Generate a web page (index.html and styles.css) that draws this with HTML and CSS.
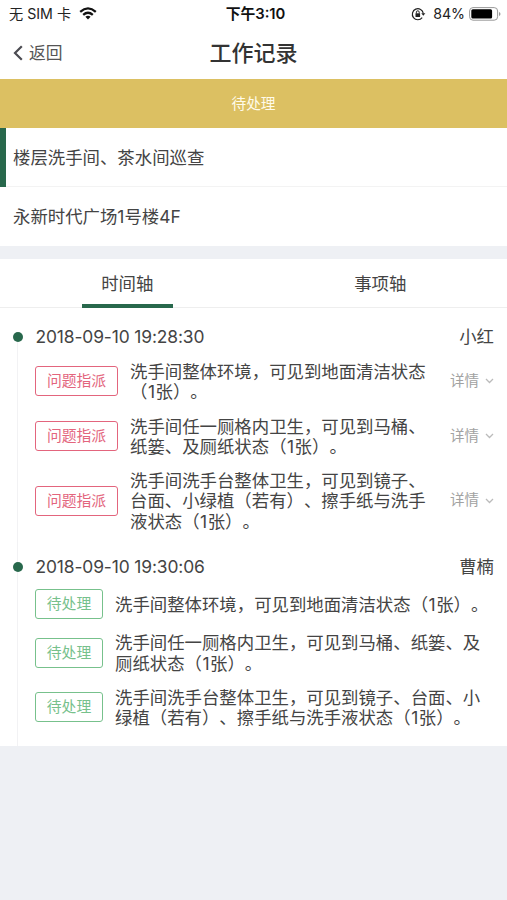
FILE: index.html
```html
<!DOCTYPE html>
<html lang="zh-CN">
<head>
<meta charset="utf-8">
<title>工作记录</title>
<link rel="stylesheet" href="styles.css">
</head>
<body>
<div class="status">
  <div class="status-left"><span>无 SIM 卡</span>
    <svg width="18" height="13" viewBox="0 0 18 13" fill="none" stroke="#111" stroke-width="2.3"><path d="M1.2 4.8Q9-2 16.8 4.8M4.2 7.8Q9 3.7 13.8 7.8"/><path d="M6.4 9.8Q9 7.8 11.6 9.8L9 12.5Z" fill="#111" stroke="none"/></svg>
  </div>
  <div class="status-time">下午3:10</div>
  <div class="status-right">
    <svg width="15" height="14" viewBox="0 0 15 14" fill="none" stroke="#222" stroke-width="1.2"><path d="M11.2 10.6A5.5 5.5 0 1 1 12.3 6.5"/><path d="M10.3 6.2H14.4L12.3 8.8Z" fill="#222" stroke="none"/><path d="M4.5 6.3H9.1V10H4.5Z" fill="#222" stroke="none"/><path d="M5.4 6.5V5.2Q5.4 3.8 6.8 3.8T8.2 5.2V6.5" stroke-width="1"/></svg>
    <span class="percent">84%</span>
    <svg width="32" height="14" viewBox="0 0 32 14"><rect x=".6" y=".6" width="28" height="12.6" rx="3.4" fill="#fff" stroke="#999"/><rect x="2.3" y="2.3" width="20.8" height="9.2" rx="1.5" fill="#000"/><path d="M30 5Q31.5 5.4 31.5 7T30 9Z" fill="#999"/></svg>
  </div>
</div>
<header class="nav">
  <a class="back"><svg width="10" height="16" viewBox="0 0 10 16" fill="none" stroke="#4b4b52" stroke-width="2.2"><path d="M8.8 1.2L2 8L8.8 14.8"/></svg>返回</a>
  <h1>工作记录</h1>
</header>
<div class="banner">待处理</div>
<section class="info">
  <div class="info-row task">楼层洗手间、茶水间巡查</div>
  <div class="info-row">永新时代广场1号楼4F</div>
</section>
<nav class="tabs">
  <div class="tab active"><span>时间轴</span></div>
  <div class="tab"><span>事项轴</span></div>
</nav>
<main class="timeline">
  <section class="group">
    <div class="head"><span class="dot"></span><time>2018-09-10 19:28:30</time><span class="name">小红</span></div>
    <div class="entry red"><span class="badge">问题指派</span><p>洗手间整体环境，可见到地面清洁状态<br>（<b>1</b>张）。</p><a class="more">详情<svg class="chev" viewBox="0 0 9 6"><path d="M1 1L4.5 4.5L8 1"/></svg></a></div>
    <div class="entry red"><span class="badge">问题指派</span><p>洗手间任一厕格内卫生，可见到马桶、<br>纸篓、及厕纸状态（<b>1</b>张）。</p><a class="more">详情<svg class="chev" viewBox="0 0 9 6"><path d="M1 1L4.5 4.5L8 1"/></svg></a></div>
    <div class="entry red"><span class="badge">问题指派</span><p>洗手间洗手台整体卫生，可见到镜子、<br>台面、小绿植（若有）、擦手纸与洗手<br>液状态（<b>1</b>张）。</p><a class="more">详情<svg class="chev" viewBox="0 0 9 6"><path d="M1 1L4.5 4.5L8 1"/></svg></a></div>
  </section>
  <section class="group second">
    <div class="head"><span class="dot"></span><time>2018-09-10 19:30:06</time><span class="name">曹楠</span></div>
    <div class="entry green single"><span class="badge">待处理</span><p>洗手间整体环境，可见到地面清洁状态（<b>1</b>张）。</p></div>
    <div class="entry green"><span class="badge">待处理</span><p>洗手间任一厕格内卫生，可见到马桶、纸篓、及<br>厕纸状态（<b>1</b>张）。</p></div>
    <div class="entry green"><span class="badge">待处理</span><p>洗手间洗手台整体卫生，可见到镜子、台面、小<br>绿植（若有）、擦手纸与洗手液状态（<b>1</b>张）。</p></div>
  </section>
</main>
</body>
</html>
```
FILE: styles.css
```css
* { box-sizing: border-box; }
body {
  margin: 0;
  height: 900px;
  overflow: hidden;
  background: #eef0f4;
  color: #444;
  font: 17.4px/20.3px Inter, "Noto Sans CJK SC", sans-serif;
  text-spacing-trim: space-all;
  white-space: nowrap;
}
p, h1 { margin: 0; }
b { font-weight: inherit; padding: 0 .5px; }
svg { flex: none; }
.status {
  display: grid;
  grid-template-columns: 1fr auto 1fr;
  align-items: center;
  height: 27px;
  padding: 1px 6px 0 9px;
  background: #fff;
  color: #222;
  font-size: 14.2px;
}
.status-left, .status-right { display: flex; align-items: center; }
.status-left { gap: 8px; }
.status-right { justify-content: flex-end; }
.status-time { font-weight: 600; color: #111; padding-left: 1px; font-size: 14.8px; }
.percent { margin: 0 4px 0 7px; }
.nav {
  display: grid;
  grid-template-columns: 1fr auto 1fr;
  align-items: center;
  height: 52px;
  padding: 0 13px;
  background: #fff;
}
.back { display: flex; align-items: center; gap: 6px; font-size: 16.8px; color: #555; }
.nav h1 { font-size: 22px; font-weight: 500; color: #333; }
.banner {
  height: 49px;
  line-height: 51px;
  text-align: center;
  background: #dcc062;
  color: #fffbea;
  font-size: 14.7px;
}
.info { height: 131px; padding-bottom: 13px; }
.info-row { height: 59px; padding-left: 13px; line-height: 60px; background: #fff; }
.task { border-left: 6px solid #28684c; padding-left: 7px; box-shadow: inset 0 -1px #f3f3f3; }
.tabs { display: flex; height: 49px; background: #fff; border-bottom: 1px solid #eee; }
.tab { display: flex; flex: 1; justify-content: center; }
.tab span { width: 91px; height: 49px; text-align: center; line-height: 50px; }
.active span { border-bottom: 4px solid #28684c; margin-left: 1px; }
.timeline { height: 438px; padding: 18px 13px 0; background: #fff linear-gradient(#f2f2f4, #f2f2f4) 17px 28px / 1px 100% no-repeat; }
.head { display: flex; align-items: center; height: 22px; margin-bottom: 14px; }
.head time { letter-spacing: -.12px; }
.dot { width: 10px; height: 10px; border-radius: 50%; background: #28684c; margin-right: 12.5px; }
.name { margin-left: auto; }
.entry { display: flex; align-items: center; margin-bottom: 14px; }
.second { padding-top: 10px; }
.second .head { margin-bottom: 13px; }
.single { height: 27.4px; margin-bottom: 15px; }
.badge {
  flex: none;
  width: 83px;
  height: 30px;
  margin: -2px 12px 0 22px;
  border: 1.5px solid;
  border-radius: 3px;
  line-height: 29px;
  text-align: center;
  font-size: 14.8px;
}
.red .badge { color: #e3657d; }
.green .badge { width: 68px; color: #77c18c; }
.more { display: flex; align-items: center; gap: 6px; margin: -2px 0 0 auto; color: #a2a2a2; font-size: 14.5px; }
.chev { width: 9px; height: 6px; fill: none; stroke: #bbb; stroke-width: 1.3; }
```
